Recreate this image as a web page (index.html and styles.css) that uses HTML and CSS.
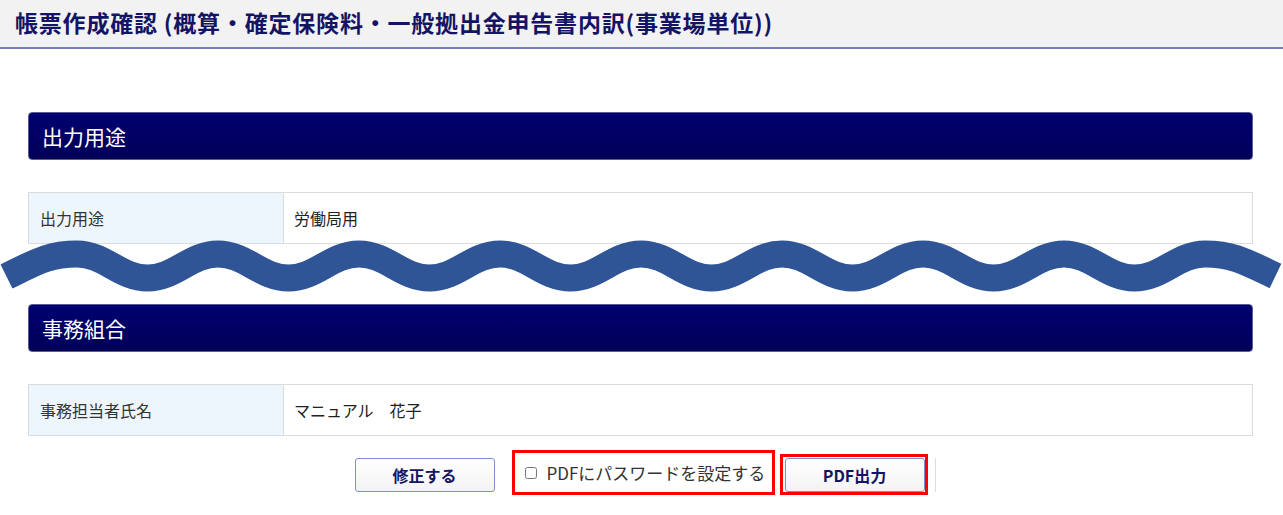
FILE: index.html
```html
<!DOCTYPE html>
<html lang="ja">
<head>
<meta charset="utf-8">
<title>帳票作成確認</title>
<link rel="stylesheet" href="styles.css">
</head>
<body>
<header class="title-bar">
  <h1 class="page-title">帳票作成確認 (概算・確定保険料・一般拠出金申告書内訳(事業場単位))</h1>
</header>

<main class="content">
  <section class="section section-first">
    <h2 class="section-head">出力用途</h2>
    <div class="info-row">
      <div class="info-label">出力用途</div>
      <div class="info-value">労働局用</div>
    </div>
  </section>

  <section class="section section-second">
    <h2 class="section-head">事務組合</h2>
    <div class="info-row">
      <div class="info-label">事務担当者氏名</div>
      <div class="info-value">マニュアル　花子</div>
    </div>
  </section>

  <div class="actions">
    <button class="btn btn-edit" type="button">修正する</button>
    <label class="hl-box pw-box">
      <input type="checkbox" class="pw-check">
      <span class="pw-text">PDFにパスワードを設定する</span>
    </label>
    <div class="hl-box pdf-box">
      <button class="btn btn-pdf" type="button">PDF出力</button>
    </div>
    <span class="divider"></span>
  </div>
</main>

<svg class="wave" viewBox="0 225 1283 80" width="1283" height="80" aria-hidden="true">
  <path d="M6.5,276.5 C36,262 49,254 77,254
    s42.5,24 70.5,24 s42.5,-24 70.5,-24
    s42.5,24 70.5,24 s42.5,-24 70.5,-24
    s42.5,24 70.5,24 s42.5,-24 70.5,-24
    s42.5,24 70.5,24 s42.5,-24 70.5,-24
    s42.5,24 70.5,24 s42.5,-24 70.5,-24
    s42.5,24 70.5,24 s42.5,-24 70.5,-24
    s42.5,24 70.5,24 s42.5,-24 70.5,-24
    s42.5,24 70.5,24 s42.5,-24 70.5,-24
    C1233,254 1245.5,261.6 1275.5,276"
    fill="none" stroke="#2f5597" stroke-width="27" stroke-linecap="butt"/>
</svg>
</body>
</html>
```

FILE: styles.css
```css
* { box-sizing: border-box; }

html, body {
  margin: 0;
  padding: 0;
  background: #ffffff;
}

body {
  position: relative;
  width: 1283px;
  height: 515px;
  overflow: hidden;
  font-family: "Noto Sans CJK JP", "Noto Sans", sans-serif;
  color: #333333;
}

.title-bar {
  height: 49px;
  background: #f2f2f2;
  border-bottom: 2px solid #7a7aba;
  display: flex;
  align-items: center;
  padding-left: 15px;
  padding-bottom: 2px;
}

.page-title {
  margin: 0;
  font-size: 23px;
  font-weight: bold;
  color: #141466;
  line-height: 1;
  letter-spacing: 0.8px;
}

.content {
  margin: 0 30px 0 28px;
}

.section-first { margin-top: 63px; }
.section-second { margin-top: 60px; }

.section-head {
  margin: 0;
  height: 48px;
  display: flex;
  align-items: center;
  padding-left: 13px;
  background: linear-gradient(to bottom, #000070 0%, #000058 100%);
  border: 1px solid #5a5a94;
  border-radius: 4px;
  color: #ffffff;
  font-size: 21px;
  font-weight: normal;
}

.info-row {
  margin-top: 32px;
  display: grid;
  grid-template-columns: 255px 1fr;
  height: 52px;
  border: 1px solid #dcdcdc;
  font-size: 16px;
}

.info-label {
  display: flex;
  align-items: center;
  padding-left: 11px;
  background: #edf5fd;
  border-right: 1px solid #dcdcdc;
  color: #333333;
}

.info-value {
  display: flex;
  align-items: center;
  padding-left: 10px;
  color: #222222;
}

.actions {
  margin-top: 14px;
  display: flex;
  align-items: flex-start;
  justify-content: center;
  padding-left: 9px;
}

.btn {
  width: 140px;
  height: 34px;
  border: 1px solid #7e8ed0;
  border-radius: 3px;
  background: linear-gradient(to bottom, #ffffff 0%, #f3f3f3 100%);
  color: #141466;
  font-family: "Noto Sans CJK JP", "Noto Sans", sans-serif;
  font-size: 16px;
  font-weight: bold;
  padding: 0;
}

.btn-edit { margin-top: 8px; }

.hl-box {
  border: 3px solid #ff0000;
}

.pw-box {
  margin-left: 17px;
  width: 263px;
  height: 45px;
  display: flex;
  align-items: center;
  padding-left: 10px;
  font-size: 17px;
  color: #333333;
  white-space: nowrap;
}

.pw-check {
  margin: 0 10px 0 0;
  width: 12px;
  height: 12px;
}

.pdf-box {
  margin-left: 5px;
  margin-top: 4px;
  width: 148px;
  height: 41px;
  padding: 1px 0 0 2px;
}

.divider {
  margin-left: 7px;
  margin-top: 8px;
  width: 1px;
  height: 34px;
  background: #dddddd;
}

.wave {
  position: absolute;
  left: 0;
  top: 225px;
}
```
